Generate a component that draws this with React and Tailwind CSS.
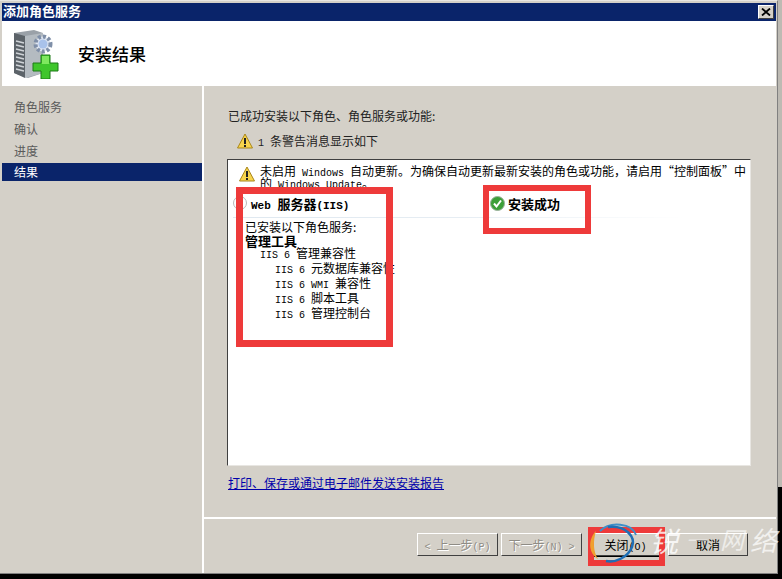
const cjk = { fontFamily: '"Noto Sans CJK SC", "Liberation Sans", sans-serif' };
const mono = { fontFamily: '"Liberation Mono", monospace' };

// half-width latin text, like the bitmap font in the dialog
function L({ children }) {
  return (
    <span className="text-[10px] leading-[0] whitespace-pre" style={mono}>
      {children}
    </span>
  );
}

function Warn({ className }) {
  return (
    <svg className={className} viewBox="0 0 16 16">
      <path d="M8 1 L15.5 15 H0.5 Z" fill="#f7d44c" stroke="#a8861c" strokeWidth="1" strokeLinejoin="round" />
      <rect x="7" y="5" width="2" height="6" fill="#222" />
      <rect x="7" y="12" width="2" height="2" fill="#222" />
    </svg>
  );
}

function ServerIcon() {
  return (
    <svg className="w-[45px] h-[50px] shrink-0" viewBox="0 0 45 50">
      <path d="M0 4 L20 1 L29 4 V44 L14 49 L0 44 Z" fill="#9aa1a8" />
      <path d="M0 4 L11 7 V49 L0 44 Z" fill="#5c6369" />
      <path d="M11 7 L29 4 V44 L11 49 Z" fill="#b4bbc1" />
      <path d="M2 12 L10 14 M2 16 L10 18 M2 20 L10 22 M2 24 L10 26 M2 28 L10 30 M2 32 L10 34 M2 36 L10 38 M2 40 L10 42" stroke="#d0d4d8" strokeWidth="1.5" />
      <circle cx="29" cy="15" r="7.5" fill="#dfe6f2" stroke="#7f8fa8" strokeWidth="4" strokeDasharray="3 2" />
      <circle cx="29" cy="15" r="4.5" fill="#a9c2ea" />
      <path d="M27 26 H36 V34 H44 V42 H36 V50 H27 V42 H19 V34 H27 Z" fill="#3fc62c" stroke="#1d7a16" strokeWidth="1" />
      <path d="M28 27 H35 V35 H28 Z" fill="#7fe85f" />
    </svg>
  );
}

function CheckIcon() {
  return (
    <svg className="w-[15px] h-[15px] shrink-0" viewBox="0 0 15 15">
      <circle cx="7.5" cy="7.5" r="7" fill="#3c9f38" stroke="#9ab09a" strokeWidth="1" />
      <path d="M4 7.5 L6.5 10.5 L11 4.5" fill="none" stroke="#fff" strokeWidth="2" />
    </svg>
  );
}

function WinButton({ children, disabled, className }) {
  return (
    <div
      className={`h-[23px] flex items-center justify-center text-[12px] leading-none border border-t-white border-l-white border-r-[#404040] border-b-[#404040] bg-[#d4d0c8] ${disabled ? 'text-[#8f8c85] [text-shadow:1px_1px_0_#fff]' : 'text-black'} ${className}`}
    >
      <span>{children}</span>
    </div>
  );
}

export default function App() {
  return (
    <div className="relative w-[782px] h-[579px] bg-black overflow-hidden flex items-start text-[12px]" style={cjk}>
      <div className="w-[778px] h-[574px] shrink-0 flex flex-col bg-[#d4d0c8] pl-[2px] pt-[2px] pr-[1px] border-t border-t-[#e8e6e2] border-r border-r-[#808080] border-b border-b-[#808080]">
        {/* title bar */}
        <div className="h-[18px] bg-[#0a246a] flex items-center justify-between pl-[1px] pr-[2px] shrink-0">
          <span className="text-white text-[13px] font-bold leading-none mt-[-4px]">添加角色服务</span>
          <div className="w-[16px] h-[14px] bg-[#d4d0c8] border border-t-white border-l-white border-r-[#404040] border-b-[#404040] flex items-center justify-center">
            <svg className="w-[10px] h-[8px]" viewBox="0 0 10 8">
              <path d="M1 0.5 L9 7.5 M9 0.5 L1 7.5" stroke="#000" strokeWidth="1.8" />
            </svg>
          </div>
        </div>
        {/* header */}
        <div className="h-[65px] bg-white flex items-center shrink-0 pl-[12px]">
          <ServerIcon />
          <span className="ml-[19px] text-[17px] text-black leading-none font-medium">安装结果</span>
        </div>
        {/* body */}
        <div className="flex-1 flex min-h-0">
          <div className="w-[200px] pt-[10px] shrink-0 text-[#5a5a5a] leading-none">
            <div className="h-[22px] pl-[12px] flex items-center">角色服务</div>
            <div className="h-[22px] pl-[12px] flex items-center">确认</div>
            <div className="h-[22px] pl-[12px] flex items-center">进度</div>
            <div className="h-[18px] mt-[1px] pl-[12px] flex items-center bg-[#0a246a] text-white">结果</div>
          </div>
          <div className="flex-1 flex flex-col border-l-2 border-white min-w-0">
            <div className="flex-1 pl-[23px] pt-[23px] flex flex-col min-h-0 text-[#222]">
              <div className="ml-[1px] h-[14px] leading-[14px]">已成功安装以下角色、角色服务或功能:</div>
              <div className="flex items-center mt-[10px] pl-[10px] h-[16px]">
                <Warn className="w-[16px] h-[16px] mr-[5px]" />
                <span className="leading-[16px]"><L>1 </L>条警告消息显示如下</span>
              </div>
              <div className="w-[524px] h-[307px] mt-[10px] bg-white border border-t-[#404040] border-l-[#404040] border-r-[#e8e6e2] border-b-[#e8e6e2] text-black overflow-hidden">
                <div className="flex pl-[11px] pt-[5px]">
                  <Warn className="w-[16px] h-[16px] mt-[1px] mr-[5px] shrink-0" />
                  <div className="w-[487px] leading-[12px]">
                    未启用<L> Windows </L>自动更新。为确保自动更新最新安装的角色或功能{'\uFF0C'}请启用<span lang="zh-CN">“控制面板”</span>中的<L> Windows Update</L>。
                  </div>
                </div>
                <div className="flex items-center h-[28px] pl-[5px]">
                  <div className="w-[14px] h-[14px] mr-[4px] rounded-full border border-[#b8b8b8] shrink-0" />
                  <span className="w-[239px] font-bold text-[13px] leading-none whitespace-nowrap">
                    <span className="text-[11px] leading-[0]" style={mono}>Web </span>服务器<span className="text-[11px] leading-[0]" style={mono}>(IIS)</span>
                  </span>
                  <CheckIcon />
                  <span className="ml-[3px] font-bold text-[13px] leading-none">安装成功</span>
                </div>
                <div className="h-px w-[452px] ml-[5px] bg-gradient-to-r from-[#dfe8f0] via-[#e6edf3] to-white" />
                <div className="pl-[17px] pt-[1px] whitespace-nowrap">
                  <div className="leading-[15px]">已安装以下角色服务:</div>
                  <div className="leading-[14px] font-bold text-[13px]">管理工具</div>
                  <div className="leading-[15px] mt-[-3px] pl-[15px]"><L>IIS 6 </L>管理兼容性</div>
                  <div className="leading-[15px] pl-[30px]"><L>IIS 6 </L>元数据库兼容性</div>
                  <div className="leading-[15px] pl-[30px]"><L>IIS 6 WMI </L>兼容性</div>
                  <div className="leading-[15px] pl-[30px]"><L>IIS 6 </L>脚本工具</div>
                  <div className="leading-[15px] pl-[30px]"><L>IIS 6 </L>管理控制台</div>
                </div>
              </div>
              <a className="ml-[1px] mt-[10px] h-[14px] leading-[14px] text-[#0000aa] underline">打印、保存或通过电子邮件发送安装报告</a>
            </div>
            <div className="h-[56px] shrink-0 border-t-2 border-white flex items-start pt-[14px] pl-[213px] gap-[3px]">
              <WinButton disabled className="w-[81px]"><L>&lt; </L>上一步<L>(P)</L></WinButton>
              <WinButton disabled className="w-[81px]">下一步<L>(N) &gt;</L></WinButton>
              <WinButton className="w-[73px] ml-[6px] pr-[4px] outline outline-1 outline-black">关闭<L>(O)</L></WinButton>
              <WinButton className="w-[80px] ml-[1px]">取消</WinButton>
            </div>
          </div>
        </div>
      </div>
      {/* sliver of the desktop behind the dialog */}
      <div className="w-[4px] h-[487px] bg-[#bdbab3]" />

      {/* red annotation boxes */}
      <div className="absolute left-[236px] top-[187px] w-[157px] h-[160px] border-[7px] border-[#ee3a3a]" />
      <div className="absolute left-[483px] top-[185px] w-[108px] h-[49px] border-[6px] border-[#ee3a3a]" />
      <div className="absolute left-[588px] top-[527px] w-[77px] h-[39px] border-[6px] border-[#ee3a3a]" />

      {/* watermark */}
      <svg className="absolute left-[586px] top-[521px] w-[60px] h-[46px]" viewBox="0 0 60 46">
        <path d="M10 10 C2 18 2 32 12 38 C7 30 7 20 10 10 Z" fill="#f0a030" />
        <path d="M14 10 C24 0 46 2 50 14" fill="none" stroke="#3f8fc8" strokeWidth="2" />
        <path d="M22 6 C40 4 50 16 46 26 C42 36 30 42 20 40" fill="none" stroke="#1f6fb5" strokeWidth="2.5" />
      </svg>
      <span className="absolute left-[650px] top-[526px] text-[28px] leading-none text-white opacity-80 italic">锐</span>
      <span className="absolute left-[686px] top-[530px] text-[20px] leading-none text-white opacity-50 italic">一</span>
      <span className="absolute left-[720px] top-[527px] text-[24px] leading-none text-white opacity-60 italic">网</span>
      <span className="absolute left-[750px] top-[526px] text-[27px] leading-none text-white opacity-70 italic">络</span>
    </div>
  );
}
